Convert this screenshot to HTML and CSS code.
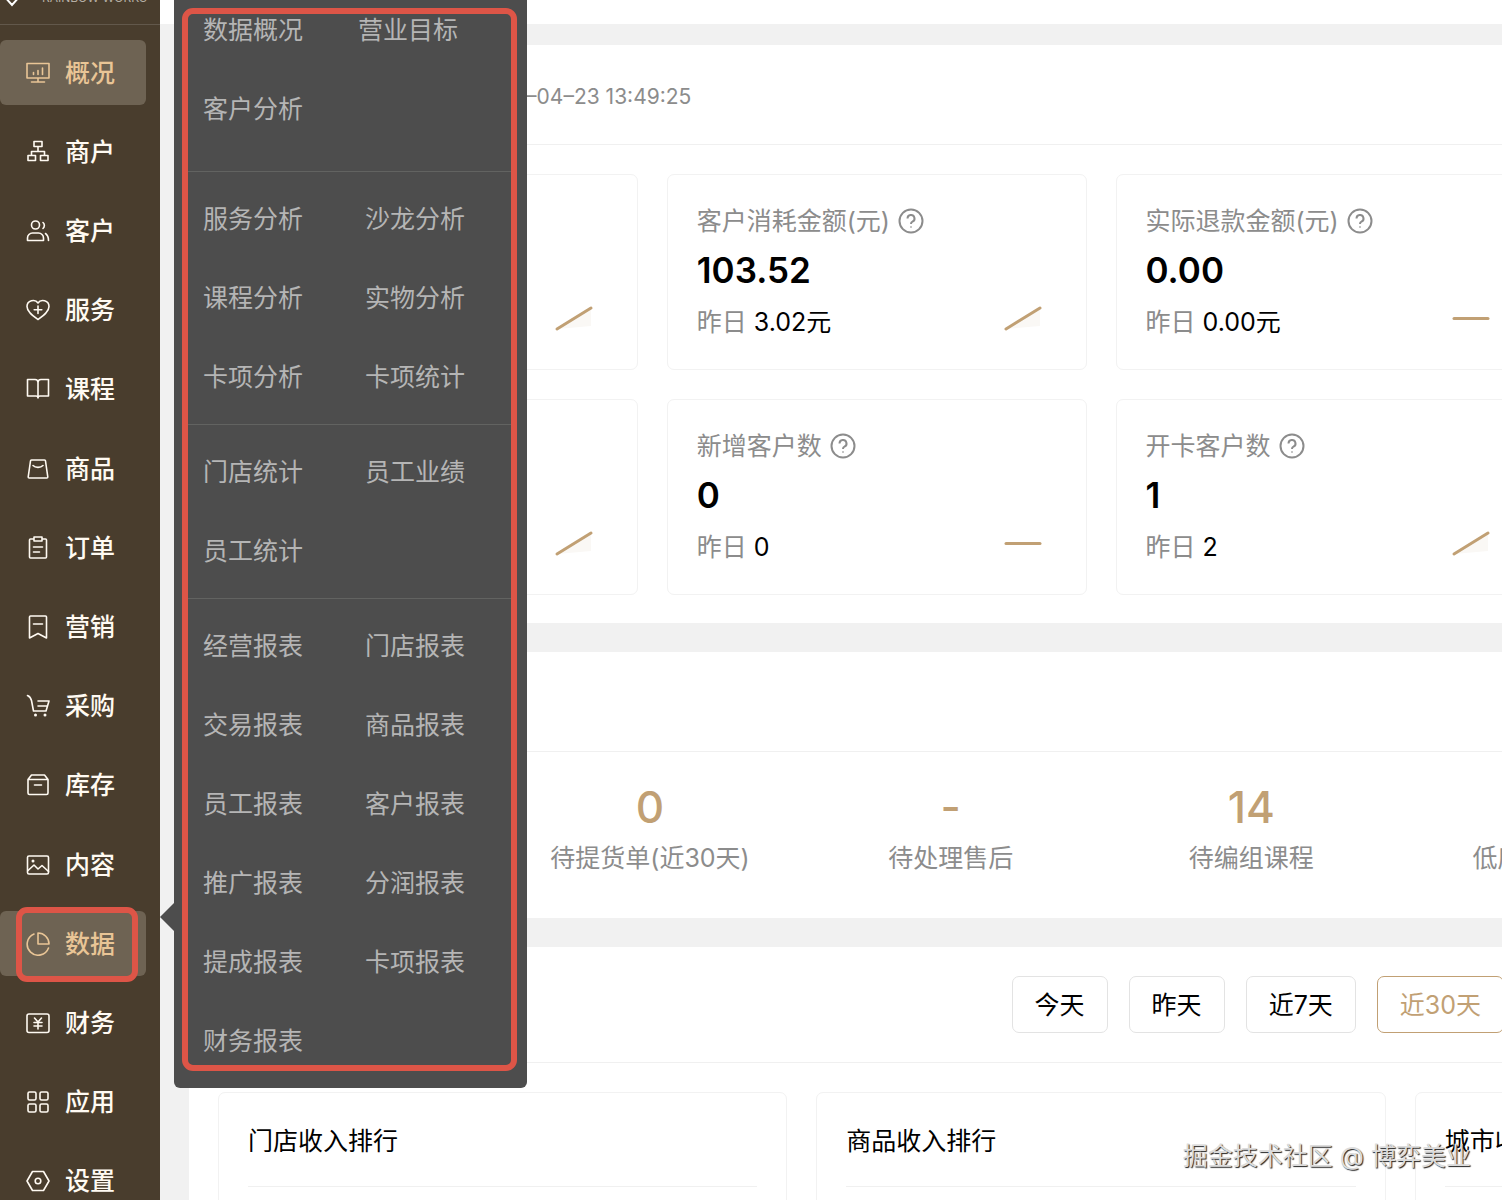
FILE: index.html
```html
<!DOCTYPE html>
<html lang="zh-CN">
<head>
<meta charset="utf-8">
<title>数据概况</title>
<link rel="stylesheet" href="styles.css">
</head>
<body>
<div class="app">
  <aside class="sidebar">
    <div class="brand">
      <svg class="brand-mark" viewBox="0 0 24 24"><path d="M12 3l8 9-8 9-8-9z"/></svg>
      <span class="brand-name">RAINBOW WORKS</span>
    </div>
    <nav class="nav">
      <a class="nav-item active" href="#"><svg class="icon" viewBox="0 0 24 24"><path d="M1 2.500h22v14.500H1zM12 17v4M5.500 21h13M7.500 13.500v-2M12 13.500v-4M16.500 13.500V7"/></svg>概况</a>
      <a class="nav-item" href="#"><svg class="icon" viewBox="0 0 24 24"><path d="M8 1.500h8v5H8zM12 6.500v5M5.500 15.500v-4h13v4M2 15.500h7.500v5H2zM14.500 15.500H22v5h-7.500z"/></svg>商户</a>
      <a class="nav-item" href="#"><svg class="icon" viewBox="0 0 24 24"><circle cx="9.500" cy="6" r="4"/><path d="M1.500 21.500v-2.500a5 5 0 0 1 5-5h6a5 5 0 0 1 5 5v2.500zM17 3.500a4 4 0 0 1 0 6M19.500 14.500c2 1.500 3 3.500 3 7"/></svg>客户</a>
      <a class="nav-item" href="#"><svg class="icon" viewBox="0 0 24 24"><path d="M12 21.500C7 18 1 14 1 8.500c0-6 8-8 11-3.500 3-4.500 11-2.500 11 3.500 0 5.500-6 9.500-11 13zM12 8v7.500M8.200 11.800h7.600"/></svg>服务</a>
      <a class="nav-item" href="#"><svg class="icon" viewBox="0 0 24 24"><path d="M1.500 2.500H9a3 3 0 0 1 3 3 3 3 0 0 1 3-3h7.500v16.500H14a2 2 0 0 0-2 2 2 2 0 0 0-2-2H1.500zM12 5.500v15.500"/></svg>课程</a>
      <a class="nav-item" href="#"><svg class="icon" viewBox="0 0 24 24"><path d="M5.500 3h13a1 1 0 0 1 1 1l2.300 16a1 1 0 0 1-1 1H3.200a1 1 0 0 1-1-1L4.500 4a1 1 0 0 1 1-1zM7 8.500c2.300 2.500 7.700 2.500 10 0"/></svg>商品</a>
      <a class="nav-item" href="#"><svg class="icon" viewBox="0 0 24 24"><path d="M8 3H4.500a1 1 0 0 0-1 1v17a1 1 0 0 0 1 1h15a1 1 0 0 0 1-1V4a1 1 0 0 0-1-1H16M8 1h8v4H8zM7.500 11h9M7.500 16h6"/></svg>订单</a>
      <a class="nav-item" href="#"><svg class="icon" viewBox="0 0 24 24"><path d="M3.500 23V2a1 1 0 0 1 1-1h15a1 1 0 0 1 1 1v21L12 18.500zM7.500 9h9"/></svg>营销</a>
      <a class="nav-item" href="#"><svg class="icon" viewBox="0 0 24 24"><path d="M1.500 1.500c2.500 1 3.500 3 4 5L7.500 17H20l3-10H12M12 12h9"/><circle class="dot" cx="9.500" cy="21" r="1.500"/><circle class="dot" cx="19" cy="21" r="1.500"/></svg>采购</a>
      <a class="nav-item" href="#"><svg class="icon" viewBox="0 0 24 24"><path d="M2 6.500h20V20a1.500 1.500 0 0 1-1.500 1.500h-17A1.500 1.500 0 0 1 2 20zM2 6.500L5.500 2h13L22 6.500M8.500 12h7"/></svg>库存</a>
      <a class="nav-item" href="#"><svg class="icon" viewBox="0 0 24 24"><rect x="1.500" y="3" width="21" height="18" rx="1.500"/><path d="M2 17.500l6-5.500 4 4 4-3.500 6.500 6"/><circle class="dot" cx="7" cy="8" r="1.500"/></svg>内容</a>
      <a class="nav-item active" href="#"><svg class="icon" viewBox="0 0 24 24"><path d="M8 2a11 11 0 1 0 14.500 14M12 1v11h11A11 11 0 0 0 12 1z"/></svg>数据</a>
      <a class="nav-item" href="#"><svg class="icon" viewBox="0 0 24 24"><rect x="1" y="3" width="22" height="18.500" rx="2"/><path d="M8.500 7l3.500 4 3.500-4M12 11v7M8 11.500h8M8 15h8"/></svg>财务</a>
      <a class="nav-item" href="#"><svg class="icon" viewBox="0 0 24 24"><rect x="2" y="2" width="8" height="8" rx="1.500"/><rect x="14" y="2" width="8" height="8" rx="1.500"/><rect x="2" y="14" width="8" height="8" rx="1.500"/><rect x="14" y="14" width="8" height="8" rx="1.500"/></svg>应用</a>
      <a class="nav-item" href="#"><svg class="icon" viewBox="0 0 24 24"><path d="M6.500 2.500h11L23 12l-5.500 9.500h-11L1 12z"/><circle cx="12" cy="12" r="2.800"/></svg>设置</a>
    </nav>
  </aside>

  <main class="main">
    <div class="topbar"></div>
    <div class="content">
      <section class="panel">
        <header class="panel-head"><time class="stamp">2024–04–23 13:49:25</time></header>
        <div class="stats">
          <article class="stat">
            <div class="stat-foot only"><svg class="spark" viewBox="0 0 40 32"><path class="fill" d="M3 27L37 6v18z"/><path d="M3 27L37 6"/></svg></div>
          </article>
          <article class="stat">
            <h3 class="stat-label">客户消耗金额(元)<svg class="help" viewBox="0 0 26 26"><circle cx="13" cy="13" r="11.500"/><path d="M9.500 10.500a3.500 3.500 0 1 1 5 3.200c-1 .5-1.500 1-1.500 2.300M13 18.500v1"/></svg></h3>
            <strong class="stat-value">103.52</strong>
            <div class="stat-foot"><span><span class="muted">昨日</span> 3.02元</span><svg class="spark" viewBox="0 0 40 32"><path class="fill" d="M3 27L37 6v18z"/><path d="M3 27L37 6"/></svg></div>
          </article>
          <article class="stat">
            <h3 class="stat-label">实际退款金额(元)<svg class="help" viewBox="0 0 26 26"><circle cx="13" cy="13" r="11.500"/><path d="M9.500 10.500a3.500 3.500 0 1 1 5 3.200c-1 .5-1.500 1-1.500 2.300M13 18.500v1"/></svg></h3>
            <strong class="stat-value">0.00</strong>
            <div class="stat-foot"><span><span class="muted">昨日</span> 0.00元</span><svg class="spark" viewBox="0 0 40 32"><path d="M3 16.500h34"/></svg></div>
          </article>
          <article class="stat"></article>
          <article class="stat">
            <div class="stat-foot only"><svg class="spark" viewBox="0 0 40 32"><path class="fill" d="M3 27L37 6v18z"/><path d="M3 27L37 6"/></svg></div>
          </article>
          <article class="stat">
            <h3 class="stat-label">新增客户数<svg class="help" viewBox="0 0 26 26"><circle cx="13" cy="13" r="11.500"/><path d="M9.500 10.500a3.500 3.500 0 1 1 5 3.200c-1 .5-1.500 1-1.500 2.300M13 18.500v1"/></svg></h3>
            <strong class="stat-value">0</strong>
            <div class="stat-foot"><span><span class="muted">昨日</span> 0</span><svg class="spark" viewBox="0 0 40 32"><path d="M3 16.500h34"/></svg></div>
          </article>
          <article class="stat">
            <h3 class="stat-label">开卡客户数<svg class="help" viewBox="0 0 26 26"><circle cx="13" cy="13" r="11.500"/><path d="M9.500 10.500a3.500 3.500 0 1 1 5 3.200c-1 .5-1.500 1-1.500 2.300M13 18.500v1"/></svg></h3>
            <strong class="stat-value">1</strong>
            <div class="stat-foot"><span><span class="muted">昨日</span> 2</span><svg class="spark" viewBox="0 0 40 32"><path class="fill" d="M3 27L37 6v18z"/><path d="M3 27L37 6"/></svg></div>
          </article>
          <article class="stat"></article>
        </div>
      </section>

      <section class="panel">
        <header class="panel-head"></header>
        <div class="todos">
          <div class="todo"></div>
          <div class="todo"><strong class="todo-value">0</strong><span class="muted">待提货单(近30天)</span></div>
          <div class="todo"><strong class="todo-value">-</strong><span class="muted">待处理售后</span></div>
          <div class="todo"><strong class="todo-value">14</strong><span class="muted">待编组课程</span></div>
          <div class="todo"><strong class="todo-value">0</strong><span class="muted">低库存商品(0)</span></div>
          <div class="todo"></div>
        </div>
      </section>

      <section class="panel">
        <header class="panel-head filters">
          <button class="chip" type="button">今天</button>
          <button class="chip" type="button">昨天</button>
          <button class="chip" type="button">近7天</button>
          <button class="chip selected" type="button">近30天</button>
          <input class="range" type="text" aria-label="日期范围">
        </header>
        <div class="ranks">
          <article class="rank"><h3 class="rank-title">门店收入排行</h3></article>
          <article class="rank"><h3 class="rank-title">商品收入排行</h3></article>
          <article class="rank"><h3 class="rank-title">城市收入排行</h3></article>
        </div>
      </section>
    </div>
  </main>

  <div class="flyout">
    <div class="group first"><a href="#">数据概况</a><a href="#">营业目标</a><a href="#">客户分析</a></div>
    <div class="group"><a href="#">服务分析</a><a href="#">沙龙分析</a><a href="#">课程分析</a><a href="#">实物分析</a><a href="#">卡项分析</a><a href="#">卡项统计</a></div>
    <div class="group"><a href="#">门店统计</a><a href="#">员工业绩</a><a href="#">员工统计</a></div>
    <div class="group"><a href="#">经营报表</a><a href="#">门店报表</a><a href="#">交易报表</a><a href="#">商品报表</a><a href="#">员工报表</a><a href="#">客户报表</a><a href="#">推广报表</a><a href="#">分润报表</a><a href="#">提成报表</a><a href="#">卡项报表</a><a href="#">财务报表</a></div>
  </div>
  <div class="flyout-arrow"></div>
  <div class="mark mark-menu"></div>
  <div class="mark mark-nav"></div>
  <div class="watermark">掘金技术社区 @ 博弈美业</div>
</div>
</body>
</html>
```
FILE: styles.css
```css
* { box-sizing: border-box; }

body {
  margin: 0;
  font-family: Inter, "Noto Sans CJK SC", sans-serif;
  font-size: 25px;
  line-height: 40px;
  color: #000;
  background: #f1f1f1;
}

h3, strong { margin: 0; font-size: inherit; font-weight: 400; }
a { color: inherit; text-decoration: none; }
.muted { color: #8c8c8c; }

.app {
  position: relative;
  display: flex;
  height: 100vh;
  overflow: hidden;
}

/* Sidebar */
.sidebar {
  flex: 0 0 160px;
  display: flex;
  flex-direction: column;
  background: #493d2d;
  color: #fffaf2;
}
.brand {
  display: flex;
  align-items: flex-start;
  gap: 18px;
  height: 25px;
  border-bottom: 1px solid #62584b;
  line-height: 20px;
  white-space: nowrap;
}
.brand-mark { flex: none; width: 24px; height: 24px; margin-top: -16px; fill: none; stroke: #fff; stroke-width: 2; }
.brand-name { margin-top: -12px; color: #b5aea4; font-size: 12px; }
.nav {
  flex: 1;
  display: flex;
  flex-direction: column;
  justify-content: space-between;
  margin: 15px 14px -14px 0;
}
.nav-item {
  display: flex;
  align-items: center;
  gap: 15px;
  height: 65px;
  padding-left: 26px;
  border-radius: 6px;
  font-weight: 500;
}
.nav-item.active { background: #6e6353; color: #e9c596; }
.icon {
  width: 24px;
  height: 24px;
  fill: none;
  stroke: currentColor;
  stroke-width: 1.6;
  stroke-linejoin: round;
  stroke-linecap: round;
}
.dot { fill: currentColor; stroke: none; }

/* Main column */
.main { flex: 1; min-width: 0; overflow: hidden; }
.topbar { height: 24px; background: #fff; }
.content {
  display: flex;
  flex-direction: column;
  gap: 29px;
  min-width: 1882px;
  padding: 21px 29px;
}
.panel { background: #fff; }
.panel-head {
  display: flex;
  align-items: center;
  height: 100px;
  padding: 0 29px;
  border-bottom: 1px solid #f0f0f0;
}
.stamp { margin-left: 256px; padding-top: 4px; font-size: 21px; color: #8c8c8c; }

.stats {
  display: grid;
  grid-template-columns: repeat(4, 1fr);
  gap: 29px;
  padding: 29px 29px 28px;
}
.stat {
  display: flex;
  flex-direction: column;
  padding: 29px 29px 27px;
  border: 1px solid #f2f2f2;
  border-radius: 7px;
}
.stat-label {
  display: flex;
  align-items: center;
  gap: 8px;
  line-height: 34px;
  color: #8c8c8c;
}
.help { width: 26px; height: 26px; fill: none; stroke: currentColor; stroke-width: 2; }
.stat-value { font-size: 35px; font-weight: 600; line-height: 64px; }
.stat-foot {
  display: flex;
  justify-content: space-between;
  align-items: flex-start;
  height: 40px;
  padding-right: 14px;
}
.stat-foot.only { justify-content: flex-end; margin-top: auto; }
.spark { width: 40px; height: 32px; fill: none; stroke: #c1a074; stroke-width: 3; stroke-linecap: round; }
.spark .fill { fill: #faf8f5; stroke: none; }

.todos {
  display: grid;
  grid-template-columns: repeat(6, 1fr);
  height: 166px;
  padding: 24px 10px 0;
  text-align: center;
}
.todo { display: flex; flex-direction: column; }
.todo-value { font-size: 44px; font-weight: 500; line-height: 62px; color: #c1a074; }

.filters { gap: 21px; justify-content: flex-end; height: 116px; }
.chip, .range {
  height: 57px;
  padding: 0 22px;
  border: 1px solid #e3e3e3;
  border-radius: 7px;
  background: #fff;
  font: inherit;
  color: #000;
}
.chip.selected { border-color: #c1a074; color: #c1a074; }
.range { width: 459px; }

.ranks {
  display: grid;
  grid-template-columns: repeat(3, 1fr);
  gap: 29px;
  padding: 29px;
}
.rank {
  min-height: 400px;
  padding: 0 29px;
  border: 1px solid #f2f2f2;
  border-radius: 7px;
}
.rank-title { padding-top: 3px; line-height: 90px; border-bottom: 1px solid #f0f0f0; }

/* Second-level menu beside the sidebar */
.flyout {
  position: absolute;
  left: 174px;
  top: -18px;
  width: 353px;
  padding: 0 14px;
  border-radius: 6px;
  background: #4d4d4d;
  color: #b5b5b5;
}
.group {
  display: grid;
  grid-template-columns: 162px 1fr;
  padding: 8px 0 7px 15px;
  line-height: 79px;
  border-top: 1px solid #626361;
}
.group.first { grid-template-columns: 155px 1fr; padding-bottom: 22px; }
.flyout-arrow {
  position: absolute;
  left: 160px;
  top: 903px;
  border: 14px solid transparent;
  border-left: 0;
  border-right-color: #4d4d4d;
}

/* Highlight frames */
.mark { position: absolute; border: 6px solid #dd5547; border-radius: 11px; }
.mark-menu { left: 182px; top: 8px; width: 335px; height: 1063px; }
.mark-nav { left: 16px; top: 907px; width: 122px; height: 75px; }

.watermark {
  position: absolute;
  right: 31px;
  bottom: 24px;
  color: #dcdcdc;
  text-shadow: 1px 1px 1px #222;
}
```
